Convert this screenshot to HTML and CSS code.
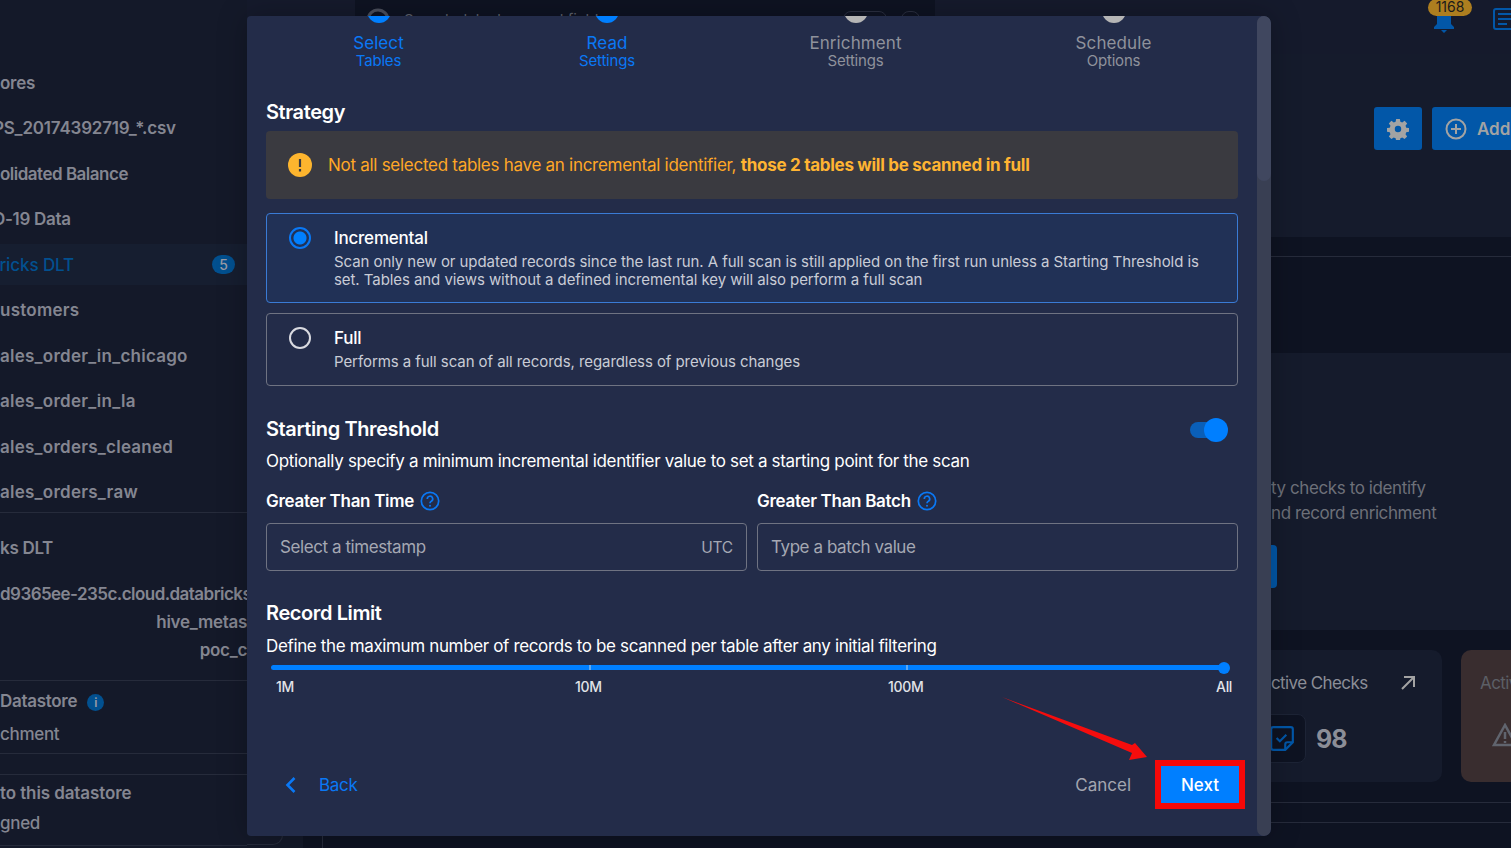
FILE: index.html
```html
<!DOCTYPE html>
<html lang="en">
<head>
    <meta charset="UTF-8">
    <meta name="viewport" content="width=device-width, initial-scale=1.0">
    <title>Add Datastore Scan</title>
    <link rel="stylesheet" href="styles.css">
</head>
<body>
    <div class="app">
        <!-- Dimmed sidebar behind the dialog -->
        <aside class="sidebar">
            <div class="side-row"><span>ores</span></div>
            <div class="side-row"><span class="cut side-code">PS_20174392719_*.csv</span></div>
            <div class="side-row side-tight"><span>olidated Balance</span></div>
            <div class="side-row"><span class="cut">D-19 Data</span></div>
            <div class="side-row side-active"><span class="cut-b">bricks DLT</span><b class="count">5</b></div>
            <div class="side-row side-wide"><span>ustomers</span></div>
            <div class="side-row side-wide"><span>ales_order_in_chicago</span></div>
            <div class="side-row side-wide"><span>ales_order_in_la</span></div>
            <div class="side-row side-wide"><span>ales_orders_cleaned</span></div>
            <div class="side-row side-wide side-last"><span>ales_orders_raw</span></div>
            <div class="side-block">
                <div class="side-title">ks DLT</div>
                <div class="side-host">d9365ee-235c.cloud.databricks</div>
                <div class="side-sub">hive_metas</div>
                <div class="side-sub">poc_c</div>
            </div>
            <div class="side-block side-store">
                <div class="side-title">Datastore <i class="info">i</i></div>
                <div class="side-note">chment</div>
            </div>
            <div class="side-block side-assign">
                <div class="side-title">to this datastore</div>
                <div class="side-note">gned</div>
            </div>
        </aside>

        <!-- Dimmed main page behind the dialog -->
        <main class="main">
            <header class="topbar">
                <div class="search">
                    <svg class="search-icon" width="24" height="24" viewBox="0 0 24 24"><circle cx="12" cy="12" r="10" fill="none" stroke="#4b4f5c" stroke-width="3"/></svg>
                    <span class="search-text">Search datastores and fields</span>
                    <i class="search-pill"></i>
                    <i class="search-box"></i>
                </div>
                <div class="bell">
                    <svg width="24" height="34" viewBox="0 0 24 34"><path d="M12 8c-5 0-7 4-7 8v8l-3 3v2h20v-2l-3-3v-8c0-4-2-8-7-8zM9 30h6l-3 3z" fill="#0257a8"/></svg>
                    <span class="bell-badge">1168</span>
                </div>
                <svg class="list-icon" width="22" height="24" viewBox="0 0 22 24"><rect x="1" y="1" width="28" height="20" rx="2" fill="none" stroke="#0257a8" stroke-width="2"/><path d="M5 6h16M5 11h16M5 16h9" stroke="#0257a8" stroke-width="2"/></svg>
            </header>
            <section class="hero">
                <button class="square-btn">
                    <svg width="22" height="22" viewBox="0 0 24 24"><path fill="#a3a3a3" fill-rule="evenodd" d="M10 1h4l.6 3.1 2 .8 2.6-1.800 2.800 2.800-1.800 2.600.8 2 3 .5v4l-3 .6-.8 2 1.800 2.600-2.800 2.800-2.600-1.800-2 .8-.6 3h-4l-.6-3-2-.8-2.600 1.800-2.800-2.800 1.800-2.600-.8-2-3-.6v-4l3-.5.8-2L2 5.900l2.800-2.800 2.600 1.800 2-.8zM12 8.500a3.500 3.500 0 1 0 0 7 3.500 3.500 0 0 0 0-7z"/></svg>
                </button>
                <button class="add-btn">
                    <svg width="22" height="22" viewBox="0 0 22 22"><circle cx="11" cy="11" r="9.5" fill="none" stroke="#a3a3a3" stroke-width="2"/><path d="M11 6v10M6 11h10" stroke="#a3a3a3" stroke-width="2"/></svg>
                    Add Checks
                </button>
            </section>
            <div class="tabs"></div>
            <section class="empty">
                <p>ty checks to identify<br>nd record enrichment</p>
                <div class="empty-btn"></div>
            </section>
            <section class="cards">
                <div class="card">
                    <div class="card-head"><span>ctive Checks</span>
                        <svg width="16" height="16" viewBox="0 0 16 16"><path d="M2 14L14 2M4 2h10v10" fill="none" stroke="#a3a3a3" stroke-width="2"/></svg>
                    </div>
                    <div class="card-body">
                        <div class="card-icon">
                            <svg width="26" height="26" viewBox="0 0 24 24"><path d="M4 1h16a2 2 0 0 1 2 2v12l-7 7H4a2 2 0 0 1-2-2V3a2 2 0 0 1 2-2z" fill="none" stroke="#0257a8" stroke-width="2"/><path d="M15 22v-5a2 2 0 0 1 2-2h5" fill="none" stroke="#0257a8" stroke-width="2"/><path d="M7 11l3 3 6-6" fill="none" stroke="#0257a8" stroke-width="2"/></svg>
                        </div>
                        <span class="card-num">98</span>
                    </div>
                </div>
                <div class="card card-warn">
                    <div class="card-head"><span>Active</span></div>
                    <svg class="warn-icon" width="26" height="24" viewBox="0 0 26 24"><path d="M13 2L2 22h22z" fill="none" stroke="#60646e" stroke-width="2.5"/><path d="M13 9v7M13 18v2" stroke="#60646e" stroke-width="2.5"/></svg>
                </div>
            </section>
            <div class="rules"></div>
            <div class="foot">
                <div class="foot-left"><i class="foot-curve"></i></div>
                <i class="foot-line"></i>
            </div>
        </main>
    </div>

    <div class="overlay">
        <div class="dialog">
            <div class="dialog-scroll">
                <div class="stepper">
                    <div class="step step-on"><i class="disc"></i><strong>Select</strong><span>Tables</span></div>
                    <div class="step step-on"><i class="disc"></i><strong>Read</strong><span>Settings</span></div>
                    <div class="step"><i class="disc"></i><strong>Enrichment</strong><span>Settings</span></div>
                    <div class="step"><i class="disc"></i><strong>Schedule</strong><span>Options</span></div>
                </div>

                <h2 class="heading">Strategy</h2>
                <div class="alert">
                    <svg width="24" height="24" viewBox="0 0 24 24"><circle cx="12" cy="12" r="12" fill="#fdb52e"/><path d="M12 6v8M12 16v2.5" stroke="#3a3a40" stroke-width="2.2"/></svg>
                    <p>Not all selected tables have an incremental identifier, <b>those 2 tables will be scanned in full</b></p>
                </div>

                <label class="option option-on">
                    <i class="radio radio-on"></i>
                    <div>
                        <div class="option-title">Incremental</div>
                        <div class="option-text">Scan only new or updated records since the last run. A full scan is still applied on the first run unless a Starting Threshold is set. Tables and views without a defined incremental key will also perform a full scan</div>
                    </div>
                </label>
                <label class="option">
                    <i class="radio"></i>
                    <div>
                        <div class="option-title">Full</div>
                        <div class="option-text">Performs a full scan of all records, regardless of previous changes</div>
                    </div>
                </label>

                <div class="threshold-head">
                    <h2 class="heading">Starting Threshold</h2>
                    <div class="toggle"><i></i></div>
                </div>
                <p class="lead">Optionally specify a minimum incremental identifier value to set a starting point for the scan</p>
                <div class="fields">
                    <div class="field">
                        <div class="field-label">Greater Than Time
                            <svg width="20" height="20" viewBox="0 0 20 20"><circle cx="10" cy="10" r="8.7" fill="none" stroke="#0a78f5" stroke-width="1.7"/><path d="M7.300 8a2.700 2.700 0 1 1 4 2.300c-.9.5-1.300 1-1.300 2" fill="none" stroke="#0a78f5" stroke-width="1.7"/><circle cx="10" cy="14.700" r="1" fill="#0a78f5"/></svg>
                        </div>
                        <div class="input"><span>Select a timestamp</span><span class="input-unit">UTC</span></div>
                    </div>
                    <div class="field">
                        <div class="field-label">Greater Than Batch
                            <svg width="20" height="20" viewBox="0 0 20 20"><circle cx="10" cy="10" r="8.7" fill="none" stroke="#0a78f5" stroke-width="1.7"/><path d="M7.300 8a2.700 2.700 0 1 1 4 2.300c-.9.5-1.300 1-1.300 2" fill="none" stroke="#0a78f5" stroke-width="1.7"/><circle cx="10" cy="14.700" r="1" fill="#0a78f5"/></svg>
                        </div>
                        <div class="input"><span>Type a batch value</span></div>
                    </div>
                </div>

                <h2 class="heading record-head">Record Limit</h2>
                <p class="lead">Define the maximum number of records to be scanned per table after any initial filtering</p>
                <div class="slider">
                    <i class="tick tick-a"></i><i class="tick tick-b"></i><i class="thumb"></i>
                </div>
                <div class="slider-labels">
                    <span>1M</span><span>10M</span><span>100M</span><span>All</span>
                </div>

                <div class="footer">
                    <a class="back">
                        <svg width="12" height="16" viewBox="0 0 12 16"><path d="M9.500 1L2.500 8l7 7" fill="none" stroke="#0a78f5" stroke-width="2.6"/></svg>
                        Back
                    </a>
                    <div class="footer-right">
                        <a class="cancel">Cancel</a>
                        <button class="next">Next</button>
                    </div>
                </div>
            </div>
            <div class="scrollbar"><div class="scrollbar-thumb"></div></div>
        </div>
        <!-- Red annotation arrow -->
        <svg class="arrow" width="150" height="66" viewBox="0 0 150 66"><polygon points="0,0 130,48 133,46 145,60 127,63 130,56" fill="#f50d0d"/></svg>
    </div>
</body>
</html>
```

FILE: styles.css
```css
/* General Styles */
* {
    box-sizing: border-box;
}

body {
    margin: 0;
    height: 848px;
    overflow: hidden;
    font-family: Inter, 'Noto Sans', sans-serif;
    background: #0e1322;
    color: #fff;
}

p, h2 {
    margin: 0;
}

.app {
    display: flex;
    height: 848px;
}

/* Sidebar Styles */
.sidebar {
    flex: 0 0 247px;
    height: 848px;
    overflow: hidden;
    padding-top: 60px;
    background: #141929;
    color: #848691;
    font-size: 17px;
    font-weight: 600;
    letter-spacing: -0.3px;
    white-space: nowrap;
}

.side-row {
    display: flex;
    align-items: center;
    justify-content: space-between;
    height: 45.5px;
    padding-right: 12px;
}

.side-wide {
    letter-spacing: 0.25px;
}

.side-tight {
    letter-spacing: -0.5px;
}

.side-code {
    letter-spacing: -0.2px;
}

.cut {
    margin-left: -7px;
}

.cut-b {
    margin-left: -11px;
}

.side-active {
    height: 41px;
    margin: 2.25px 0;
    background: #161e30;
    color: #02508f;
    font-weight: 500;
    letter-spacing: -0.1px;
}

.side-last {
    height: 43.5px;
    padding-top: 2px;
    border-bottom: 1px solid #262b3b;
}

.count {
    width: 23px;
    height: 19px;
    border-radius: 10px;
    background: #02508f;
    color: #9a9ca6;
    font-size: 14px;
    font-weight: 500;
    line-height: 19px;
    text-align: center;
}

.side-block {
    border-bottom: 1px solid #262b3b;
}

.side-title {
    padding-top: 24px;
    line-height: 22px;
}

.side-host {
    margin: 24px 0 3px;
    line-height: 22px;
    letter-spacing: -0.55px;
}

.side-sub {
    height: 28px;
    line-height: 28px;
    text-align: right;
}

.side-sub:last-child {
    height: 44px;
}

.side-store {
    height: 73px;
    margin-bottom: 20px;
}

.side-store .side-title {
    padding-top: 9px;
    letter-spacing: -0.3px;
}

.side-note {
    margin-top: 11px;
    font-weight: 500;
    line-height: 22px;
}

.side-assign {
    height: 72px;
    border-top: 1px solid #262b3b;
}

.side-assign .side-title {
    padding-top: 7px;
    letter-spacing: -0.1px;
}

.side-assign .side-note {
    margin-top: 8px;
}

.info {
    display: inline-block;
    width: 17px;
    height: 17px;
    margin-left: 6px;
    border-radius: 50%;
    background: #02508f;
    color: #9a9ca6;
    font-size: 12px;
    font-style: normal;
    line-height: 17px;
    text-align: center;
}

/* Main Page Styles */
.main {
    flex: 1;
    min-width: 0;
    height: 848px;
    overflow: hidden;
}

.topbar {
    display: flex;
    height: 54px;
    padding-left: 108px;
    background: #151a2c;
}

.search {
    display: flex;
    flex: none;
    gap: 14px;
    width: 580px;
    height: 40px;
    padding: 8px 15px 0 11px;
    border-radius: 0 0 12px 12px;
    background: #0e1322;
    color: #5d616c;
    font-size: 15px;
}

.search-text {
    margin-top: 2px;
    flex: 1;
}

.search-pill, .search-box {
    flex: none;
    height: 24px;
    margin-top: 3px;
    border: 1px solid #2a2f40;
    border-radius: 8px;
}

.search-pill {
    width: 44px;
}

.search-box {
    width: 19px;
}

.bell {
    position: relative;
    flex: none;
    width: 24px;
    margin-left: 497px;
}

.bell svg {
    position: absolute;
    left: 0;
    top: 0;
}

.bell-badge {
    position: absolute;
    left: -4px;
    top: -1px;
    width: 44px;
    height: 17px;
    border-radius: 9px;
    background: #ad7e1f;
    color: #1a1a1a;
    font-size: 14px;
    line-height: 15px;
    text-align: center;
}

.list-icon {
    flex: none;
    margin: 8px 0 0 37px;
}

.hero {
    display: flex;
    gap: 10px;
    justify-content: flex-end;
    height: 183px;
    margin-right: -50px;
    padding-top: 53px;
    background: #151b2c;
}

.square-btn, .add-btn {
    display: flex;
    align-items: center;
    justify-content: center;
    height: 43px;
    border: none;
    border-radius: 3px;
    background: #0257a8;
    color: #a3a3a3;
    font: 600 17px Inter, sans-serif;
}

.square-btn {
    width: 48px;
}

.add-btn {
    gap: 10px;
    width: 129px;
    padding: 0 0 0 13px;
    justify-content: flex-start;
    white-space: nowrap;
}

.add-btn svg {
    flex: none;
}

.tabs {
    height: 116px;
    background: linear-gradient(#0e1322 19px, #262b3b 19px, #262b3b 20px, #0e1322 20px);
}

.empty {
    height: 277px;
    padding-top: 123px;
    background: #151b2c;
    color: #6d7079;
    font-size: 17px;
    line-height: 25px;
    letter-spacing: -0.4px;
}

.empty p {
    margin-left: 1024px;
    white-space: nowrap;
}

.empty-btn {
    width: 60px;
    height: 43px;
    margin: 19px 0 0 970px;
    border-radius: 4px;
    background: #0257a8;
}

.cards {
    display: flex;
    gap: 19px;
    height: 132px;
    margin-top: 20px;
    padding-left: 985px;
}

.card {
    flex: 0 0 210px;
    padding: 23px 26px 0 39px;
    border-radius: 10px;
    background: #151b2c;
    color: #8c8e97;
    font-size: 17px;
    letter-spacing: -0.6px;
}

.card-head {
    display: flex;
    align-items: center;
    justify-content: space-between;
    white-space: nowrap;
}

.card-body {
    display: flex;
    align-items: center;
    gap: 10px;
    margin: 21px 0 0 -18px;
}

.card-icon {
    display: flex;
    align-items: center;
    justify-content: center;
    width: 53px;
    height: 49px;
    padding-left: 4px;
    border: 1px solid #1d2436;
    border-radius: 8px;
    background: #0e1322;
}

.card-num {
    margin-top: 1px;
    font-size: 25px;
    font-weight: 700;
    letter-spacing: -1px;
}

.card-warn {
    flex: 0 0 100px;
    padding-left: 19px;
    background: #392d2f;
    color: #5c5f66;
}

.warn-icon {
    display: block;
    margin: 30px 0 0 12px;
}

.rules {
    height: 21px;
    margin-top: 20px;
    border-top: 1px solid #262b3b;
    border-bottom: 1px solid #262b3b;
}

.foot {
    display: flex;
    height: 25px;
}

.foot-left {
    width: 56px;
    height: 100%;
    background: #141929;
}

.foot-curve {
    display: block;
    width: 36px;
    height: 22px;
    border-right: 1px solid #262b3b;
    border-bottom: 1px solid #262b3b;
    border-radius: 0 0 10px 0;
}

.foot-line {
    width: 1px;
    margin-left: 19px;
    background: #262b3b;
}

/* Dialog Styles */
.overlay {
    position: absolute;
    inset: 0;
}

.dialog {
    position: absolute;
    left: 247px;
    top: 16px;
    display: flex;
    width: 1024px;
    height: 820px;
    overflow: hidden;
    border-radius: 4px 7px 7px 4px;
    background: #232c49;
    box-shadow: 0 0 30px rgba(0, 0, 0, 0.25);
}

.dialog-scroll {
    display: flex;
    flex: 1;
    flex-direction: column;
    min-width: 0;
    padding: 0 19px;
}

.scrollbar {
    flex: 0 0 14px;
    border-radius: 7px;
    background: #393f53;
}

.scrollbar-thumb {
    height: 165px;
    border-radius: 7px;
    background: #40475f;
}

/* Stepper */
.stepper {
    position: relative;
    height: 55px;
}

.step {
    position: absolute;
    top: -7px;
    display: flex;
    flex-direction: column;
    align-items: center;
    width: 160px;
    color: #8f929c;
    font-size: 15px;
    line-height: 18px;
    letter-spacing: -0.2px;
}

.step:nth-child(1) { left: 32.5px; }
.step:nth-child(2) { left: 261px; }
.step:nth-child(3) { left: 509.5px; }
.step:nth-child(4) { left: 767.5px; }

.step strong {
    font-size: 17px;
    font-weight: 400;
    line-height: 18px;
    letter-spacing: 0.1px;
}

.step-on {
    color: #0a78f5;
}

.disc {
    width: 24px;
    height: 24px;
    margin-top: -10px;
    margin-bottom: 11px;
    border-radius: 50%;
    background: #b5b5b5;
}

.step-on .disc {
    background: #007fff;
}

.heading {
    font-size: 20px;
    font-weight: 600;
    line-height: 26px;
    letter-spacing: -0.4px;
}

.stepper + .heading {
    margin-top: 28px;
}

/* Alert */
.alert {
    display: flex;
    align-items: center;
    gap: 16px;
    height: 68px;
    margin-top: 6px;
    padding-left: 22px;
    border-radius: 4px;
    background: #3a3a40;
    color: #ffa726;
    font-size: 17px;
    letter-spacing: -0.28px;
}

.alert svg {
    flex: none;
}

.alert b {
    color: #ffb432;
    font-weight: 700;
}

/* Strategy Options */
.option {
    display: flex;
    gap: 23px;
    margin-top: 10px;
    padding: 13px 22px 14px 22px;
    border: 1px solid #6f7382;
    border-radius: 4px;
}

.alert + .option {
    margin-top: 14px;
}

.option-on {
    height: 90px;
    border-color: #3a7bd5;
    background: #213156;
}

.radio {
    flex: none;
    width: 22px;
    height: 22px;
    border: 2px solid #d9dae0;
    border-radius: 50%;
}

.radio-on {
    border-color: #0a78f5;
    background: radial-gradient(circle, #007fff 6px, transparent 7px);
}

.option-title {
    font-size: 17px;
    font-weight: 500;
    line-height: 22px;
    letter-spacing: -0.2px;
}

.option-text {
    margin-top: 4px;
    color: #c9ccd6;
    font-size: 15px;
    line-height: 18px;
    letter-spacing: -0.07px;
}

.threshold-head {
    display: flex;
    align-items: center;
    justify-content: space-between;
    margin-top: 30px;
    padding-right: 10px;
}

.toggle {
    position: relative;
    width: 26px;
    height: 16px;
    margin: 2px 12px 0 0;
    border-radius: 8px;
    background: #0a5fb8;
}

.toggle i {
    position: absolute;
    left: 14px;
    top: -4px;
    width: 24px;
    height: 24px;
    border-radius: 50%;
    background: #007fff;
}

.lead {
    margin-top: 7px;
    font-size: 17px;
    line-height: 24px;
    letter-spacing: -0.33px;
}

.fields {
    display: flex;
    gap: 10px;
    margin-top: 17px;
}

.field {
    flex: 1;
    min-width: 0;
}

.field-label {
    display: flex;
    align-items: center;
    gap: 6px;
    height: 22px;
    font-size: 17px;
    font-weight: 600;
    letter-spacing: -0.3px;
}

.input {
    display: flex;
    align-items: center;
    justify-content: space-between;
    height: 48px;
    margin-top: 11px;
    padding: 0 13px;
    border: 1px solid #6f7382;
    border-radius: 4px;
    color: #a5a8b3;
    font-size: 17px;
    letter-spacing: -0.42px;
}

.input-unit {
    font-size: 15.5px;
    letter-spacing: -0.2px;
}

.record-head {
    margin-top: 29px;
}

.record-head + .lead {
    margin-top: 8px;
    letter-spacing: -0.36px;
}

/* Slider */
.slider {
    position: relative;
    height: 5px;
    margin: 7px 14px 0 5px;
    border-radius: 3px;
    background: #007fff;
}

.tick {
    position: absolute;
    top: 0;
    width: 2px;
    height: 5px;
    background: #5fa8f0;
}

.tick-a { left: 318px; }
.tick-b { left: 635px; }

.thumb {
    position: absolute;
    right: -6px;
    top: -3px;
    width: 12px;
    height: 12px;
    border-radius: 50%;
    background: #007fff;
}

.slider-labels {
    display: flex;
    margin-top: 8px;
    padding-left: 10px;
    color: #e1e3e8;
    font-size: 14px;
    font-weight: 500;
    line-height: 18px;
    letter-spacing: -0.3px;
}

.slider-labels span:nth-child(1) { flex: 0 0 299px; }
.slider-labels span:nth-child(2) { flex: 0 0 313px; }
.slider-labels span:nth-child(3) { flex: 0 0 328px; }

/* Footer */
.footer {
    display: flex;
    align-items: center;
    justify-content: space-between;
    margin-top: 64px;
    margin-right: -7px;
    padding-left: 19px;
}

.back {
    display: flex;
    align-items: center;
    gap: 22px;
    color: #0a78f5;
    font-size: 17px;
    letter-spacing: -0.3px;
}

.footer-right {
    display: flex;
    align-items: center;
    gap: 24px;
}

.cancel {
    color: #a3a6b0;
    font-size: 17px;
}

.next {
    width: 90px;
    height: 49px;
    border: 6px solid #f50808;
    background: #007fff;
    color: #fff;
    font: 500 17px Inter, sans-serif;
}

.arrow {
    position: absolute;
    left: 1002px;
    top: 697px;
}
```
